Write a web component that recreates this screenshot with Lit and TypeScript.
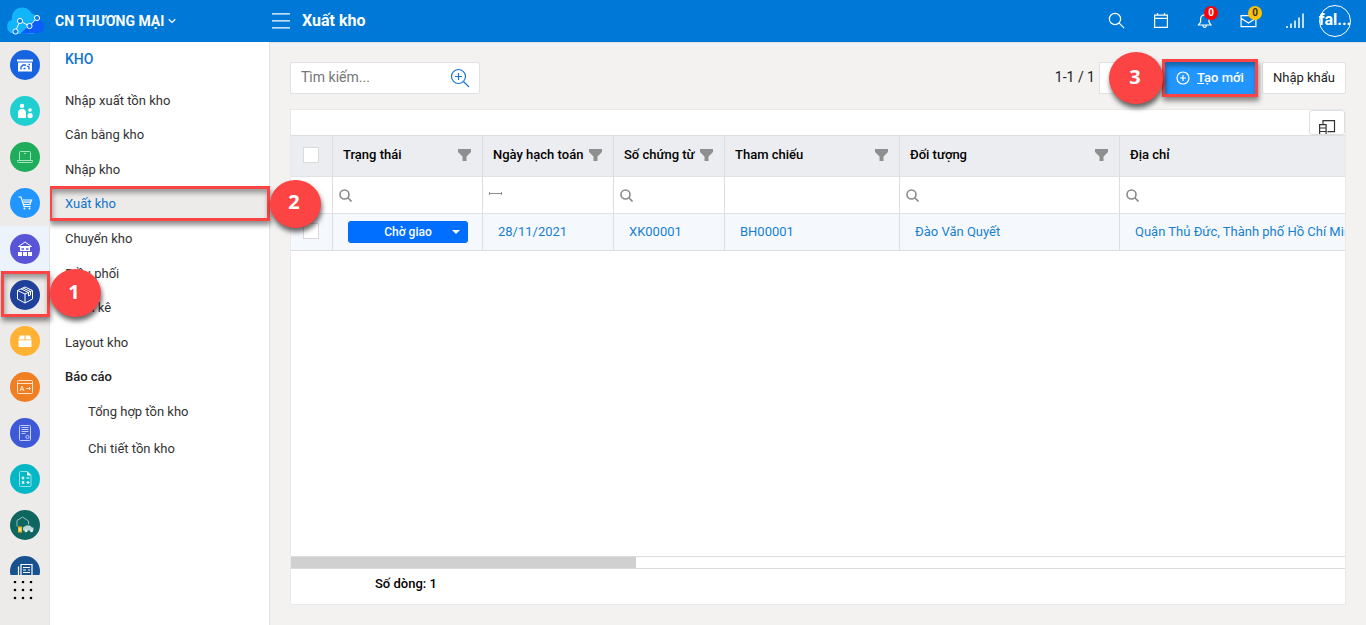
import { LitElement, html, css, svg, nothing } from "lit";
import { customElement, state } from "lit/decorators.js";
import { classMap } from "lit/directives/class-map.js";

const railIcons = [
  {
    name: "Bàn làm việc", color: "#1763e0",
    art: svg`<path fill="#fff" d="M7 9.500h16v2H7zM8 12.500h14v9H8z"/><path d="M11 19.500v-2.500l2-2h3M17 16l2 1v2.500M13.500 18.500h2M18.500 14.500h1.500" fill="none" stroke="#1763e0" stroke-width="1.300"/>`,
  },
  {
    name: "Khách hàng", color: "#20d0d0",
    art: svg`<g fill="#fff"><circle cx="12" cy="10" r="2.200"/><path d="M8 22v-5a4 4 0 0 1 8 0v5z"/><circle cx="20" cy="14" r="1.800"/><path d="M17.500 20a2.600 3 0 0 1 5.200 0c0 3-5.200 3-5.200 0z"/></g>`,
  },
  {
    name: "Bán hàng", color: "#1fad5b",
    art: svg`<g fill="none" stroke="#a5e6c0" stroke-width="1"><rect x="9.500" y="9.500" width="11" height="9" rx="1"/><path d="M7.500 18.500h15v1a1 1 0 0 1-1 1h-13a1 1 0 0 1-1-1zM14 11.500h2"/></g>`,
  },
  {
    name: "Mua hàng", color: "#2196ff",
    art: svg`<g fill="none" stroke="#fff" stroke-width="1.200"><path d="M8.500 9h2.500l3 9.500h6.500M13 12h8.500l-1.500 4.500h-6.500M13.500 14.200h7.500"/></g><circle cx="14.500" cy="20.500" r="1" fill="#fff"/><circle cx="19.500" cy="20.500" r="1" fill="#fff"/>`,
  },
  {
    name: "Chi nhánh", color: "#5856d6", soft: true,
    art: svg`<path d="M8.500 12.500L15 8l6.500 4.500z" fill="none" stroke="#fff"/><path fill="#fff" d="M10 13h10v4H10zM8 18h4v4H8zM13 18h4v4h-4zM18 18h4v4h-4z"/><path d="M11.500 15h2.500M16 15h2.500" stroke="#5856d6" stroke-width="1.500"/>`,
  },
  {
    name: "Kho", color: "#1f419b", step: true,
    art: svg`<g fill="none" stroke="#fff" stroke-width="1" stroke-linejoin="round"><path d="M15 7l7.500 3.500v8.500L15 23l-7.500-4v-8.500zM7.500 10.500L15 14l7.500-3.500M15 14v9M11 8.800l7.500 3.700v3.500l2-1v-3.500L13 8"/></g>`,
  },
  {
    name: "Sản phẩm", color: "#ffb234",
    art: svg`<path fill="#fff" d="M10 9.500h4.500v4H8.500zM15.500 9.500H20l1.500 4h-6zM8.500 14.200h13V20a1 1 0 0 1-1 1h-11a1 1 0 0 1-1-1z"/>`,
  },
  {
    name: "Nhân sự", color: "#f07f24",
    art: svg`<g fill="none" stroke="#ffe3c8" stroke-width="1"><rect x="7.500" y="8.500" width="15" height="13" rx="1"/><path d="M7.500 11.500h15M10 19l2-5 2 5M10.700 17.500h2.600M16 16.500h4.500M19 15l1.500 1.500L19 18"/></g>`,
  },
  {
    name: "Hóa đơn", color: "#3d59d8",
    art: svg`<g fill="none" stroke="#c3cefb" stroke-width="1"><rect x="9.500" y="7.500" width="11" height="15" rx="1"/><path d="M11.500 9.500h7M11.500 11.500h7M11.500 13.500h7M11.500 15.500h4"/><circle cx="17.500" cy="19" r="1.600"/></g>`,
  },
  {
    name: "Kế toán", color: "#06b8c6",
    art: svg`<path d="M10.500 7.500h7l3.500 3.500v10.500a1 1 0 0 1-1 1h-9.500a1 1 0 0 1-1-1v-13a1 1 0 0 1 1-1z" fill="none" stroke="#8ce6ec"/><path d="M17 7.500l4 4h-4z" fill="#fff"/><path d="M11.500 14h3M13 12.500v3M16.500 14h3M12 17.500l2.200 2.200M14.200 17.500L12 19.700M16.500 18.500h3M18 17v3" stroke="#fff" stroke-width="1.200"/>`,
  },
  {
    name: "Tài sản", color: "#0f6560",
    art: svg`<path d="M7 16.500v-6L12.500 7l6 4v3.500" fill="none" stroke="#8fc4be" stroke-width="1"/><path d="M13 17.500l3-2h4l2 2h1.500v3H13z" fill="#b7d9d5"/><circle cx="16" cy="20.800" r="1.500" fill="#dfeeee"/><circle cx="21.500" cy="20.800" r="1.500" fill="#dfeeee"/><path d="M8 16.500h4v6H8z" fill="#f3b91f"/><path d="M10 18v3" stroke="#fff"/>`,
  },
  {
    name: "Báo chí", color: "#17528f",
    art: svg`<g fill="none" stroke="#fff" stroke-width="1.200"><path d="M11 8.500h11v14H11zM8.500 10.500v12M13 11.500h7M13 14h3M18 14h2M13 16.500h7"/></g>`,
  },
];

const menuItems = [
  { label: "Nhập xuất tồn kho" },
  { label: "Cân bằng kho" },
  { label: "Nhập kho" },
  { label: "Xuất kho", active: true },
  { label: "Chuyển kho" },
  { label: "Điều phối" },
  { label: "Kiểm kê" },
  { label: "Layout kho" },
  { label: "Báo cáo", heading: true },
];
const reportItems = ["Tổng hợp tồn kho", "Chi tiết tồn kho"];

const columns = [
  { key: "status", label: "Trạng thái", filter: "search" },
  { key: "date", label: "Ngày hạch toán", filter: "range" },
  { key: "number", label: "Số chứng từ", filter: "search" },
  { key: "ref", label: "Tham chiếu", filter: "none" },
  { key: "partner", label: "Đối tượng", filter: "search" },
  { key: "address", label: "Địa chỉ", filter: "search" },
];

const rows = [
  {
    date: "28/11/2021", number: "XK00001", ref: "BH00001",
    partner: "Đào Văn Quyết", address: "Quận Thủ Đức, Thành phố Hồ Chí Minh",
  },
];

const base = css`
  *, *::before, *::after { box-sizing: border-box; }
  svg { display: block; flex: none; }
  a { color: inherit; text-decoration: none; }
  ul { list-style: none; margin: 0; padding: 0; }
  button, input, select { font: inherit; color: inherit; margin: 0; padding: 0; border: 0; background: none; }
  button { cursor: pointer; }
`;

const guide = css`
  .frame {
    position: absolute;
    border: 3px solid #fc4444;
    box-shadow: 1px 4px 5px rgba(0, 0, 0, 0.45), inset 1px 4px 5px rgba(0, 0, 0, 0.35);
    pointer-events: none;
  }
  .step {
    position: absolute;
    display: grid;
    place-items: center;
    border-radius: 50%;
    background: #fc4444;
    box-shadow: 1px 4px 5px rgba(0, 0, 0, 0.6);
    color: #fff;
    font: bold 20px/24px "Open Sans", sans-serif;
    pointer-events: none;
  }
`;

@customElement("top-bar")
class TopBar extends LitElement {
  static styles = [base, css`
    :host {
      display: flex;
      align-items: center;
      height: 42px;
      background: #0078d7;
      color: #fff;
      position: relative;
      z-index: 1;
      box-shadow: 0 1px 0 #dfe0e1;
    }
    .brand { display: flex; align-items: center; width: 272px; padding-left: 6px; }
    .branch { display: flex; align-items: center; gap: 4px; margin-left: 10px; font-weight: 700; font-size: 14px; line-height: 20px; }
    .menu { margin-right: 12px; }
    h1 { margin: 0; flex: 1; font-size: 16px; line-height: 20px; font-weight: 700; }
    .tools { display: flex; align-items: center; gap: 26px; margin-right: 13px; }
    .tool { position: relative; display: block; }
    .badge {
      position: absolute;
      left: 8px;
      top: -6px;
      width: 14px;
      height: 14px;
      border-radius: 50%;
      background: #f00;
      font-size: 10px;
      line-height: 14px;
      font-weight: 700;
      text-align: center;
    }
    .amber { background: #ffc107; color: #333; }
    .avatar {
      display: flex;
      justify-content: center;
      width: 32px;
      height: 32px;
      margin-right: 15px;
      border: 1px solid #fff;
      border-radius: 50%;
      font-weight: 700;
      font-size: 16px;
      line-height: 28px;
      white-space: nowrap;
    }
  `];

  render() {
    return html`
      <div class="brand">
        <svg width="39" height="30" viewBox="0 0 39 30">
          <path fill="#12b4fa" d="M8 28a7.500 7.500 0 0 1-2-14.500C5 7 10 1.500 16 1.500c5 0 8.500 3 10 6.500 5 0 7 4 7 7L28 28z"/>
          <path fill="#0d5dfb" d="M14 28l16-15c5 0 8 3 8 7.500S35 27 31 27z"/>
          <path d="M9.500 25L14 15l9.500 5L31 12" fill="none" stroke="#fff" stroke-width="1"/>
          <g fill="#0e7cf0" stroke="#fff" stroke-width="1"><circle cx="9.500" cy="25.500" r="2.600"/><circle cx="14" cy="15" r="2.600"/><circle cx="23.500" cy="20" r="2.600"/><circle cx="31" cy="12" r="2.600"/></g>
        </svg>
        <button class="branch">CN THƯƠNG MẠI
          <svg width="8" height="8" viewBox="0 0 8 8"><path d="M.700 2.300L4 5.500l3.300-3.200" fill="none" stroke="#fff" stroke-width="1.200"/></svg>
        </button>
      </div>
      <button class="menu" aria-label="Menu">
        <svg width="18" height="16" viewBox="0 0 18 16"><path d="M0 .800h18M0 7.800h18M0 14.800h18" stroke="#fff" stroke-width="1.300"/></svg>
      </button>
      <h1>Xuất kho</h1>
      <div class="tools">
        <button class="tool" aria-label="Tìm kiếm">
          <svg width="18" height="18" viewBox="0 0 18 18" fill="none" stroke="#fff" stroke-width="1.200"><circle cx="7" cy="7" r="5.600"/><path d="M11.200 11.200l5 5"/></svg>
        </button>
        <button class="tool" aria-label="Lịch">
          <svg width="18" height="18" viewBox="0 0 18 18" fill="none" stroke="#fff" stroke-width="1.200"><path d="M2.600 3.100h12.800v12.300H2.600zM2.600 6.300h12.800M5.500 1v2M12.500 1v2"/></svg>
        </button>
        <button class="tool" aria-label="Thông báo">
          <svg width="18" height="18" viewBox="0 0 18 18" fill="none" stroke="#fff" stroke-width="1.200"><path d="M2.500 13h12.500l-2-3V7a4.200 4.200 0 0 0-8.400 0v3zM7 13.600a1.700 1.700 0 0 0 3.400 0M8.800 1.500V3"/></svg>
          <span class="badge">0</span>
        </button>
        <button class="tool" aria-label="Thư">
          <svg width="18" height="18" viewBox="0 0 18 18" fill="none" stroke="#fff" stroke-width="1.200"><path d="M1.100 3.600h14.800v11H1.100zM1.100 6.200L8.500 11l7.400-4.800"/></svg>
          <span class="badge amber">0</span>
        </button>
        <button class="tool" aria-label="Tín hiệu">
          <svg width="22" height="18" viewBox="0 0 22 18" stroke="#fff" stroke-width="1.500"><path d="M3 14v2M7 11.500v4.500M11 8.500V16M15 5.500V16M19 1.500v14.500"/></svg>
        </button>
      </div>
      <button class="avatar" aria-label="Tài khoản">fal...</button>
    `;
  }
}

@customElement("module-rail")
class ModuleRail extends LitElement {
  static styles = [base, guide, css`
    :host {
      display: flex;
      flex-direction: column;
      width: 50px;
      min-height: 0;
      background: #edebe9;
      border-right: 1px solid #e1e2e4;
      position: relative;
      z-index: 3;
    }
    .list { flex: 1; min-height: 0; clip-path: inset(0 -60px 0 0); }
    .item { position: relative; display: flex; align-items: center; justify-content: center; height: 46px; }
    .soft { background: #edf3fd; }
    .frame { inset: -1px -1px 1px 1px; }
    .step { left: 50px; top: -3px; width: 51px; height: 48px; padding: 0 3px 3px 0; }
    .more { display: flex; justify-content: center; height: 50px; padding: 6px 4px 0 0; }
  `];

  render() {
    return html`
      <ul class="list">
        ${railIcons.map((m) => html`
          <li>
            <a class=${classMap({ item: true, soft: !!m.soft })} href="#" aria-label=${m.name}>
              <svg width="30" height="30" viewBox="0 0 30 30"><circle cx="15" cy="15" r="15" fill=${m.color}/>${m.art}</svg>
              ${m.step ? html`<span class="frame"></span><span class="step">1</span>` : nothing}
            </a>
          </li>`)}
      </ul>
      <button class="more" aria-label="Tất cả ứng dụng">
        <svg width="20" height="20" viewBox="0 0 20 20" fill="#000">
          ${[2, 10, 18].map((y) => [2, 10, 18].map((x) => svg`<circle cx=${x} cy=${y - 1} r="1.300"/>`))}
        </svg>
      </button>
    `;
  }
}

@customElement("side-menu")
class SideMenu extends LitElement {
  static styles = [base, guide, css`
    :host {
      display: block;
      width: 220px;
      background: #fff;
      border-right: 1px solid #e1e2e4;
      font-size: 13px;
      line-height: 16px;
      color: #333;
      position: relative;
      z-index: 2;
    }
    h2 { margin: 0; padding: 7px 15px 14px; font-size: 14px; line-height: 20px; font-weight: 500; color: #0f75cb; }
    .list { display: grid; grid-auto-rows: 1fr; height: 311px; }
    .link { position: relative; display: flex; align-items: center; height: 100%; padding: 1px 15px 0; }
    .active { background: #edebe9; color: #0f75cb; }
    .heading { font-weight: 500; color: #222; }
    .reports .link { height: 37px; padding: 0 0 2px 38px; }
    .frame { inset: -1px -1px 0 -1px; }
    .step { right: -52px; top: -7px; width: 51px; height: 48px; padding: 0 3px 3px 0; }
  `];

  render() {
    return html`
      <h2>KHO</h2>
      <ul class="list">
        ${menuItems.map((i) => html`
          <li>
            <a class=${classMap({ link: true, active: !!i.active, heading: !!i.heading })} href="#">${i.label}
              ${i.active ? html`<span class="frame"></span><span class="step">2</span>` : nothing}
            </a>
          </li>`)}
      </ul>
      <ul class="reports">
        ${reportItems.map((r) => html`<li><a class="link" href="#">${r}</a></li>`)}
      </ul>
    `;
  }
}

const funnel = svg`<path d="M0 0h13v3L8.500 7.500V12h-4V7.500L0 3z" fill="#8f8f8f"/>`;

@customElement("voucher-grid")
class VoucherGrid extends LitElement {
  static styles = [base, css`
    :host {
      display: flex;
      flex-direction: column;
      min-height: 0;
      background: #fff;
      border: 1px solid #e9e9ea;
      font-size: 13px;
      line-height: 16px;
    }
    .bar { display: flex; justify-content: flex-end; height: 25px; }
    .chooser { display: flex; align-items: flex-end; justify-content: center; width: 36px; border: 1px solid #dddfe2; border-radius: 3px; overflow: hidden; }
    .body { flex: 1; min-height: 0; overflow: hidden; }
    table { width: 100%; table-layout: fixed; border-collapse: separate; border-spacing: 0; border-top: 1px solid #dcdee0; }
    th, td { padding: 0; border-right: 1px solid #dcdee0; border-bottom: 1px solid #e0e2e5; text-align: left; font-weight: 400; white-space: nowrap; overflow: hidden; }
    th:last-child, td:last-child { border-right: 0; }
    .head th { height: 41px; padding-bottom: 2px; background: #ecedf1; font-weight: 500; color: #000; }
    .title { display: flex; align-items: center; justify-content: space-between; padding: 0 11px 0 10px; }
    .filters td { height: 37px; }
    .filter { display: flex; align-items: center; gap: 6px; padding-left: 6px; }
    .filter input { flex: 1; min-width: 0; height: 24px; outline: 0; }
    .data td { height: 37px; padding: 0 0 0 15px; background: #f5f9fd; color: #187fd0; border-bottom-color: #dcdee0; }
    .data td.pick { padding: 0 0 2px; }
    .pick { width: 42px; }
    .status { width: 150px; }
    .date { width: 131px; }
    .number { width: 111px; }
    .ref { width: 175px; }
    .partner { width: 220px; }
    .tick { display: block; appearance: none; width: 16px; height: 16px; margin-left: 12px; border: 1px solid #d9dadc; background: #fff; }
    .state { position: relative; width: 120px; color: #fff; }
    .state select { display: block; appearance: none; width: 100%; height: 22px; border-radius: 3px; background: #006eff; text-align: center; text-align-last: center; font-weight: 500; font-size: 12px; }
    .state svg { position: absolute; right: 8px; top: 9px; pointer-events: none; }
    .track { height: 13px; border: 1px solid #dcdcdc; border-width: 1px 0; }
    .thumb { width: 345px; height: 11px; background: #d0d0d0; }
    .foot { height: 35px; padding: 7px 84px; font-weight: 500; color: #000; }
  `];

  render() {
    return html`
      <div class="bar">
        <button class="chooser" aria-label="Chọn cột">
          <svg width="18" height="14" viewBox="0 0 18 14" fill="none" stroke="#333" stroke-width="1.200"><path d="M5 4V.600h11.500v11h-7M1.600 14V4.600h6.500V14M1.600 8h6.500M1.600 11.500h6.500"/></svg>
        </button>
      </div>
      <div class="body">
        <table>
          <thead>
            <tr class="head">
              <th class="pick"><input class="tick" type="checkbox" aria-label="Chọn tất cả"></th>
              ${columns.map((c) => html`
                <th class=${c.key}><div class="title">${c.label}
                  ${c.key === "address" ? nothing : html`<svg width="13" height="12" viewBox="0 0 13 12">${funnel}</svg>`}
                </div></th>`)}
            </tr>
          </thead>
          <tbody>
            <tr class="filters">
              <td></td>
              ${columns.map((c) => html`<td>${this.filter(c)}</td>`)}
            </tr>
            ${rows.map((r) => html`
              <tr class="data">
                <td class="pick"><input class="tick" type="checkbox" aria-label="Chọn dòng"></td>
                <td>
                  <div class="state">
                    <select aria-label="Trạng thái"><option>Chờ giao</option></select>
                    <svg width="8" height="4" viewBox="0 0 8 4"><path d="M0 0h8L4 4z" fill="#fff"/></svg>
                  </div>
                </td>
                <td>${r.date}</td>
                <td><a href="#">${r.number}</a></td>
                <td><a href="#">${r.ref}</a></td>
                <td><a href="#">${r.partner}</a></td>
                <td>${r.address}</td>
              </tr>`)}
          </tbody>
        </table>
      </div>
      <div class="track"><div class="thumb"></div></div>
      <div class="foot">Số dòng: ${rows.length}</div>
    `;
  }

  filter(c: { label: string; filter: string }) {
    if (c.filter === "none") return nothing;
    const icon = c.filter === "range"
      ? html`<svg width="13" height="12" viewBox="0 0 13 12"><path d="M.500 3v3M12.500 3v3M1 4.500h11" stroke="#8f8f8f" fill="none"/></svg>`
      : html`<svg width="13" height="13" viewBox="0 0 13 13" fill="none" stroke="#8a8a8a" stroke-width="1.600"><circle cx="5.500" cy="5.500" r="4.500"/><path d="M8.800 8.800l3.700 3.700"/></svg>`;
    return html`<label class="filter">${icon}<input type="text" aria-label=${c.label}></label>`;
  }
}

@customElement("app-root")
class AppRoot extends LitElement {
  @state() private query = "";

  static styles = [base, guide, css`
    :host {
      display: flex;
      flex-direction: column;
      height: 100vh;
      overflow: hidden;
      background: #f3f2f1;
      font-family: Roboto, "Noto Sans", sans-serif;
      font-size: 13px;
      color: #222;
    }
    .shell { flex: 1; display: flex; min-height: 0; }
    .main { flex: 1; min-width: 0; display: flex; flex-direction: column; gap: 15px; padding: 20px; }
    .toolbar { display: flex; align-items: center; height: 32px; }
    .search { display: flex; align-items: center; width: 190px; height: 32px; padding: 0 9px 0 10px; background: #fff; border: 1px solid #dfe1e4; border-radius: 2px; }
    .search input { flex: 1; min-width: 0; height: 28px; padding-bottom: 2px; font-size: 14px; outline: 0; }
    .search input::placeholder { color: #757575; opacity: 1; }
    .count { margin-left: auto; margin-right: 4px; padding-bottom: 2px; font-size: 14px; line-height: 20px; }
    .nav { height: 32px; width: 58px; background: #fff; border: 1px solid #dfe1e4; margin-right: 8px; }
    .create { position: relative; z-index: 1; margin-right: 7px; }
    .primary { display: flex; align-items: center; gap: 7px; height: 32px; width: 90px; padding: 0 0 1px 11px; background: #2196ff; color: #fff; font-weight: 500; }
    .import { height: 32px; width: 84px; padding-bottom: 2px; background: #fff; border: 1px solid #dfe1e4; border-radius: 2px; color: #222; }
    .create .frame { inset: -3px -3px -3px -3px; }
    .create .step { left: -56px; top: -10px; width: 54px; height: 52px; padding: 0 2px 2px 0; }
    .grid { flex: 1; }
  `];

  render() {
    return html`
      <top-bar></top-bar>
      <div class="shell">
        <module-rail></module-rail>
        <side-menu></side-menu>
        <main class="main">
          <div class="toolbar">
            <div class="search">
              <input type="text" placeholder="Tìm kiếm..." aria-label="Tìm kiếm" .value=${this.query}
                @input=${(e: Event) => (this.query = (e.target as HTMLInputElement).value)}>
              <button aria-label="Tìm nâng cao">
                <svg width="20" height="20" viewBox="0 0 20 20" fill="none" stroke="#1a76d2" stroke-width="1.200"><circle cx="8.500" cy="8.500" r="7"/><path d="M13.500 13.500l5.500 5.500M8.500 5v7M5 8.500h7"/></svg>
              </button>
            </div>
            <span class="count">1-1 / 1</span>
            <button class="nav" aria-label="Trang"></button>
            <div class="create">
              <button class="primary">
                <svg width="14" height="14" viewBox="0 0 14 14" fill="none" stroke="#fff" stroke-width="1.200"><circle cx="7" cy="7" r="6"/><path d="M7 4v6M4 7h6"/></svg>
                <span><u>T</u>ạo mới</span>
              </button>
              <span class="frame"></span><span class="step">3</span>
            </div>
            <button class="import">Nhập khẩu</button>
          </div>
          <voucher-grid class="grid"></voucher-grid>
        </main>
      </div>
    `;
  }
}
